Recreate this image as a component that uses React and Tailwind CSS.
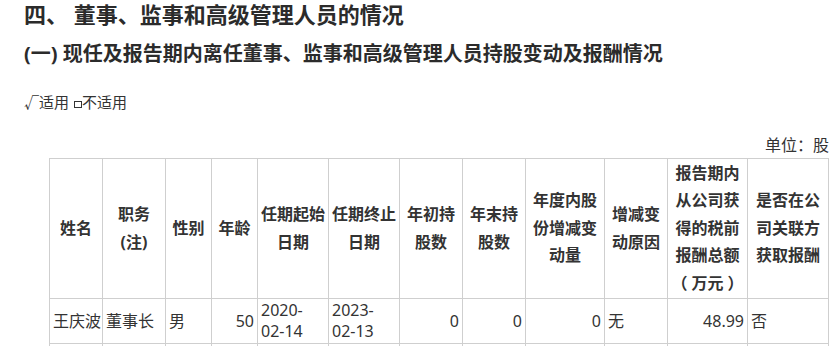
const FONT = "font-['Noto_Sans','Noto_Sans_CJK_SC',sans-serif]";

const COLS = [53, 63, 46, 46, 71, 71, 63, 63, 79, 63, 80, 81];

// full-width colon rendered with full width, as in the source document
const Wide = ({ children }) => (
  <span className="inline-block w-[16px] text-center">{children}</span>
);

const HEAD = [
  ["姓名"],
  ["职务", "(注)"],
  ["性别"],
  ["年龄"],
  ["任期起始", "日期"],
  ["任期终止", "日期"],
  ["年初持", "股数"],
  ["年末持", "股数"],
  ["年度内股", "份增减变", "动量"],
  ["增减变", "动原因"],
  [
    "报告期内",
    "从公司获",
    "得的税前",
    "报酬总额",
    <>
      <span className="mr-[4px]">（</span>万元<span className="ml-[4px]">）</span>
    </>,
  ],
  ["是否在公", "司关联方", "获取报酬"],
];

const ROW = [
  { v: "王庆波" },
  { v: "董事长" },
  { v: "男" },
  { v: "50", right: true },
  { v: ["2020-", "02-14"] },
  { v: ["2023-", "02-13"] },
  { v: "0", right: true },
  { v: "0", right: true },
  { v: "0", right: true },
  { v: "无" },
  { v: "48.99", right: true },
  { v: "否" },
];

export default function App() {
  return (
    <div className={`${FONT} bg-white text-[#333] w-[839px] h-[346px] overflow-hidden pl-[24px] pr-[10px]`}>
      <h1 className="pt-[2px] text-[22px] leading-[24px] font-bold text-[#2b2b2b] whitespace-pre">四、 董事、监事和高级管理人员的情况</h1>
      <h2 className="mt-[14px] text-[20px] leading-[28px] font-bold text-[#2b2b2b]">(一) 现任及报告期内离任董事、监事和高级管理人员持股变动及报酬情况</h2>
      <div className="mt-[24px] text-[15px] leading-[20px] flex items-center">
        <span>√适用</span>
        <span className="inline-block w-[8px] h-[7px] border border-[#333] ml-[5px] mt-[4px]" />
        <span>不适用</span>
      </div>
      <div className="mt-[23px] text-[16px] leading-[20px] text-right">
        单位<Wide>：</Wide>股
      </div>
      <table className="ml-[25px] mt-[3px] table-fixed border-collapse w-[780px] text-[16px]">
        <colgroup>
          {COLS.map((w, i) => (
            <col key={i} style={{ width: w }} />
          ))}
        </colgroup>
        <tbody>
          <tr className="h-[140px]">
            {HEAD.map((lines, i) => (
              <td key={i} className="border border-[#cfcfcf] px-[2px] text-center align-middle font-bold leading-[27.5px]">
                {lines.map((l, j) => (
                  <div key={j} className="whitespace-nowrap">{l}</div>
                ))}
              </td>
            ))}
          </tr>
          <tr className="h-[45px]">
            {ROW.map((c, i) => (
              <td
                key={i}
                className={`border border-[#cfcfcf] px-[3px] align-middle leading-[21px] whitespace-nowrap ${c.right ? "text-right" : "text-left"}`}
              >
                {Array.isArray(c.v) ? c.v.map((l, j) => <div key={j}>{l}</div>) : c.v}
              </td>
            ))}
          </tr>
          <tr className="h-[30px]">
            {COLS.map((_, i) => (
              <td key={i} className="border border-[#cfcfcf]" />
            ))}
          </tr>
        </tbody>
      </table>
    </div>
  );
}
